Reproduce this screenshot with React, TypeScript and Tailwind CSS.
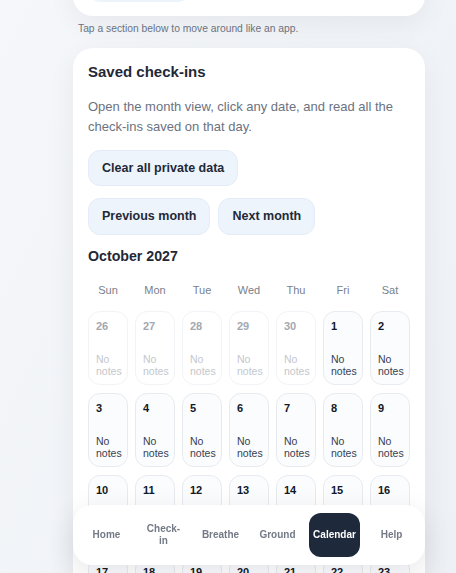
import React from "react";

type Day = { n: number; out: boolean };

const weeks: Day[][] = (() => {
  const days: Day[] = [];
  [26, 27, 28, 29, 30].forEach((n) => days.push({ n, out: true }));
  for (let i = 1; i <= 31; i++) days.push({ n: i, out: false });
  let k = 1;
  while (days.length % 7 !== 0) days.push({ n: k++, out: true });
  const rows: Day[][] = [];
  for (let i = 0; i < days.length; i += 7) rows.push(days.slice(i, i + 7));
  return rows;
})();

const weekdays = ["Sun", "Mon", "Tue", "Wed", "Thu", "Fri", "Sat"];
const navItems = ["Home", "Check-in", "Breathe", "Ground", "Calendar", "Help"];

export default function App() {
  return (
    <div
      className="min-h-screen bg-gradient-to-br from-[#f5f7fa] to-[#ebeff4] pl-[73px] pb-[120px]"
      style={{ fontFamily: '"Liberation Sans", Arial, sans-serif' }}
    >
      <div className="w-[352px]">
        <div className="-mt-[40px] rounded-[20px] bg-white px-[15px] pb-[14px] shadow-[0_8px_28px_rgba(15,23,42,0.06)]">
          <div className="flex h-[42px] w-[102px] items-center justify-center rounded-[12px] bg-[#eef4fc] text-[12.5px] font-bold text-[#1f2937]">
            Start
          </div>
        </div>
        <p className="mt-[8px] ml-[5px] text-[10.3px] leading-[10px] text-[#6b7280]">
          Tap a section below to move around like an app.
        </p>
        <div className="mt-[14px] rounded-[20px] bg-white px-[15px] pt-[15px] pb-[20px] shadow-[0_8px_28px_rgba(15,23,42,0.06)]">
          <h2 className="text-[15px] font-bold leading-[18px] text-[#1f2937]">Saved check-ins</h2>
          <p className="mt-[16px] text-[13px] leading-[20px] text-[#6b7280]">
            Open the month view, click any date, and read all the check-ins saved on that day.
          </p>
          <div className="mt-[13px] flex">
            <button className="h-[36px] rounded-[12px] border border-[#e3ecf8] bg-[#eef4fc] px-[13px] text-[12.5px] font-bold text-[#1f2937]">
              Clear all private data
            </button>
          </div>
          <div className="mt-[12px] flex gap-[8px]">
            <button className="h-[37px] rounded-[12px] border border-[#e3ecf8] bg-[#eef4fc] px-[13px] text-[12.5px] font-bold text-[#1f2937]">
              Previous month
            </button>
            <button className="h-[37px] rounded-[12px] border border-[#e3ecf8] bg-[#eef4fc] px-[13px] text-[12.5px] font-bold text-[#1f2937]">
              Next month
            </button>
          </div>
          <h3 className="mt-[11px] text-[14.2px] font-bold leading-[20px] text-[#1f2937]">October 2027</h3>
          <div className="mt-[17px] grid grid-cols-7 gap-x-[7px]">
            {weekdays.map((d) => (
              <div key={d} className="text-center text-[11px] leading-[14px] text-[#7a818c]">
                {d}
              </div>
            ))}
          </div>
          <div className="mt-[14px] flex flex-col gap-[8px]">
            {weeks.map((row, ri) => (
              <div key={ri} className="grid grid-cols-7 gap-x-[7px]">
                {row.map((d, di) => (
                  <div
                    key={di}
                    className={
                      d.out
                        ? "flex h-[74px] flex-col justify-between rounded-[12px] border border-[#f1f3f6] bg-white p-[7px] pt-[8px]"
                        : "flex h-[74px] flex-col justify-between rounded-[12px] border border-[#e7ebf0] bg-[#fbfcfe] p-[7px] pt-[8px]"
                    }
                  >
                    <div
                      className={
                        d.out
                          ? "text-[11px] font-bold leading-[12px] text-[#a3a8b0]"
                          : "text-[11px] font-bold leading-[12px] text-[#111827]"
                      }
                    >
                      {d.n}
                    </div>
                    <div
                      className={
                        d.out
                          ? "text-[10.5px] leading-[12px] text-[#c3c7cd]"
                          : "text-[10.5px] leading-[12px] text-[#374151]"
                      }
                    >
                      No notes
                    </div>
                  </div>
                ))}
              </div>
            ))}
          </div>
        </div>
      </div>

      <nav className="fixed bottom-[8px] left-[73px] w-[352px] rounded-[20px] bg-white px-[8px] py-[8px] shadow-[0_8px_28px_rgba(15,23,42,0.10)]">
        <div className="grid grid-cols-6 gap-x-[6px]">
          {navItems.map((item) => (
            <div
              key={item}
              className={
                item === "Calendar"
                  ? "flex h-[44px] items-center justify-center rounded-[12px] bg-[#1e293b] px-[6px] text-center text-[10px] font-bold leading-[12px] text-white"
                  : "flex h-[44px] items-center justify-center rounded-[12px] px-[6px] text-center text-[10px] font-bold leading-[12px] text-[#737a86]"
              }
            >
              {item}
            </div>
          ))}
        </div>
      </nav>
    </div>
  );
}
